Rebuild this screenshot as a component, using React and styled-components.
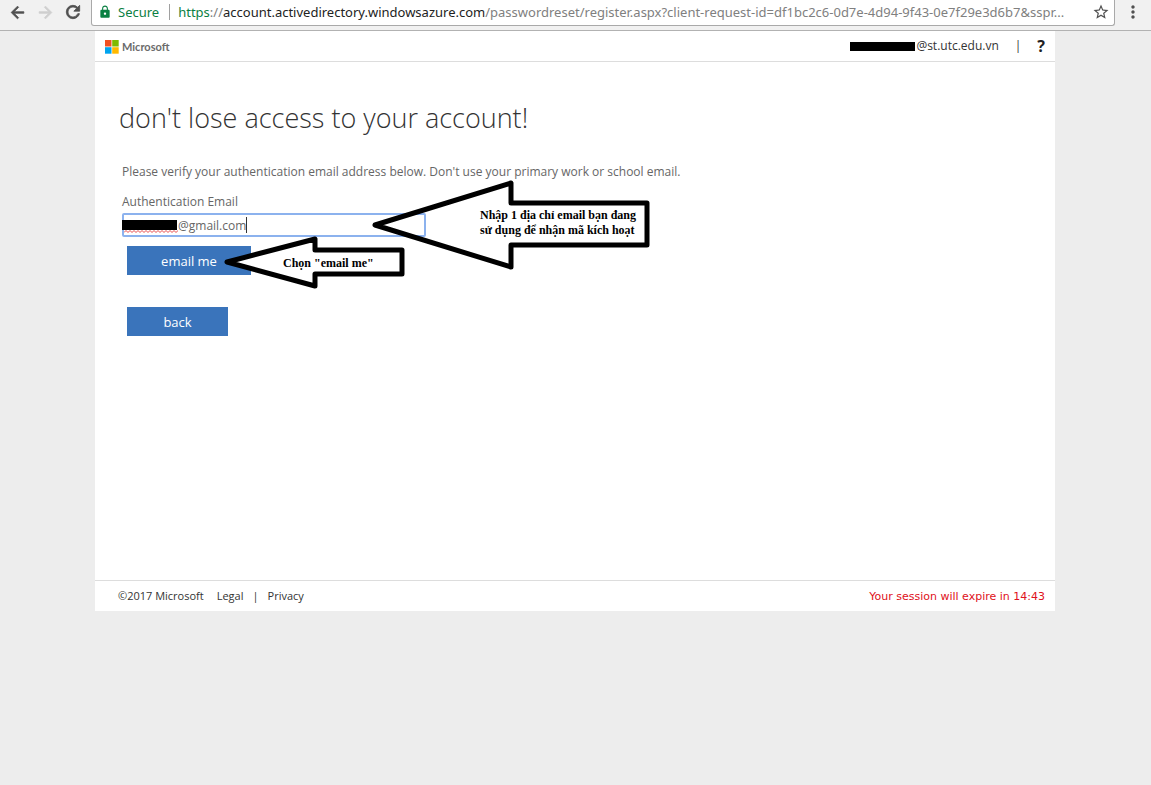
import React, { useState } from 'react';
import styled, { createGlobalStyle } from 'styled-components';
import {
  MdArrowBack,
  MdArrowForward,
  MdRefresh,
  MdLock,
  MdStarBorder,
  MdMoreVert,
} from 'react-icons/md';

const GlobalStyle = createGlobalStyle`
  *, *::before, *::after { box-sizing: border-box; }
  body {
    margin: 0;
    background: #ededed;
    color: #333;
    font: 12px/16px "Open Sans", "Noto Sans", sans-serif;
  }
`;

const Toolbar = styled.header`
  display: flex;
  align-items: flex-start;
  height: 31px;
  padding-left: 7px;
  background: #f1f1f1;
  border-bottom: 1px solid #b2b2b2;
`;

const IconButton = styled.button`
  display: flex;
  flex: none;
  align-items: center;
  justify-content: center;
  width: ${(p) => p.$width || 28}px;
  height: 24px;
  padding: 0;
  border: 0;
  background: none;
  color: ${(p) => (p.$dim ? '#cfcfcf' : '#505050')};
  font-size: 20px;

  path:last-child {
    stroke: currentColor;
    stroke-width: ${(p) => (p.$bold ? 1 : 0)};
  }
`;

const AddressBar = styled.div`
  display: flex;
  flex: 1;
  align-items: flex-start;
  min-width: 0;
  height: 26px;
  border: 1px solid #a9a9a9;
  border-top: 0;
  border-radius: 0 0 3px 3px;
  background: #fff;
  font: 13px/24px "Noto Sans", sans-serif;
`;

const Secure = styled.span`
  display: flex;
  align-items: center;
  gap: 6px;
  height: 24px;
  padding: 0 10px 0 6px;
  color: #0b8043;
`;

const Divider = styled.span`
  flex: none;
  width: 1px;
  height: 16px;
  margin: 4px 8px 0 0;
  background: #a0a0a0;
`;

const Url = styled.span`
  flex: 1;
  min-width: 0;
  overflow: hidden;
  white-space: nowrap;
  color: #808080;
`;

const Scheme = styled.span`
  color: #0b8043;
`;

const Host = styled.span`
  color: #222;
`;

const Stage = styled.div`
  padding-right: 1px;
`;

const Page = styled.div`
  max-width: 960px;
  margin: 0 auto;
  background: #fff;
`;

const Banner = styled.div`
  display: flex;
  align-items: center;
  justify-content: space-between;
  height: 31px;
  padding: 0 10px;
  border-bottom: 1px solid #ddd;
`;

const Brand = styled.a`
  display: flex;
  align-items: center;
  gap: 3px;
  padding-top: 1px;
  color: #6b6b6b;
  font: 700 11px/16px Lato, sans-serif;
  text-decoration: none;
`;

const Account = styled.div`
  display: flex;
  align-items: center;
`;

const Redaction = styled.span`
  width: 65px;
  height: 9px;
  margin-right: 1px;
  background: #000;
`;

const Separator = styled.span`
  margin: 0 ${(p) => p.$gap}px;
`;

const HelpButton = styled.button`
  padding: 0;
  border: 0;
  background: none;
  color: #222;
  font: 700 16px/20px "Noto Sans", sans-serif;
`;

const Content = styled.main`
  position: relative;
  min-height: 518px;
  padding: 36px 24px 0;
`;

const Title = styled.h1`
  margin: 0;
  color: #333;
  font: 300 27px/40px "Open Sans", sans-serif;
`;

const Form = styled.form`
  display: flex;
  flex-direction: column;
  align-items: flex-start;
  padding: 26px 3px 0;
  color: #666;
`;

const Intro = styled.p`
  margin: 0 0 14px;
`;

const Label = styled.label`
  margin-bottom: 3px;
`;

const Field = styled.div`
  position: relative;
  width: 304px;
  max-width: 100%;
  margin-bottom: 9px;
`;

const EmailInput = styled.input`
  display: block;
  width: 100%;
  height: 24px;
  padding: 0 0 0 54px;
  border: 2px solid #8cb2ee;
  border-radius: 2px;
  outline: 0;
  background: #fff;
  color: #666;
  font: 12px/20px "Open Sans", sans-serif;
`;

const FieldMask = styled.span`
  position: absolute;
  top: 7px;
  left: 0;
  width: 55px;
  height: 10px;
  background: #000;
`;

const Squiggle = styled.svg`
  position: absolute;
  top: 17px;
  left: 2px;
`;

const Caret = styled.span`
  position: absolute;
  top: 4px;
  left: 124px;
  width: 1px;
  height: 16px;
  background: #333;
`;

const ActionButton = styled.button`
  width: ${(p) => p.$width}px;
  height: 29px;
  margin: 0 0 32px 5px;
  padding: 0;
  border: 0;
  background: #3a74bb;
  color: #fff;
  font: 13px/28px "Open Sans", sans-serif;
`;

const Callout = styled.div`
  position: absolute;
  top: ${(p) => p.$top}px;
  left: ${(p) => p.$left}px;
  display: flex;
  align-items: center;
  width: ${(p) => p.$width}px;
  height: ${(p) => p.$height}px;
  padding-left: ${(p) => p.$indent}px;
  color: #000;
  font: 700 12px/15px "Liberation Serif", serif;
  white-space: nowrap;
  pointer-events: none;

  svg {
    position: absolute;
    top: 0;
    left: 0;
    overflow: visible;
  }

  span {
    position: relative;
  }
`;

const Footer = styled.footer`
  display: flex;
  align-items: center;
  height: 31px;
  padding: 0 10px 0 23px;
  border-top: 1px solid #ddd;
  color: #333;
  font-size: 11px;
`;

const FooterLink = styled.a`
  color: inherit;
  text-decoration: none;
`;

const Copyright = styled.span`
  margin-right: 13px;
`;

const Session = styled.span`
  margin-left: auto;
  padding-top: 1px;
  color: #e01020;
  font: 11px/16px "DejaVu Sans", sans-serif;
`;

function MicrosoftLogo() {
  return (
    <svg width="14" height="14" viewBox="0 0 14 14" aria-hidden="true">
      <path fill="#f25022" d="M0 0h6.5v6.5H0z" />
      <path fill="#7fba00" d="M7.2 0h6.5v6.5H7.2z" />
      <path fill="#00a4ef" d="M0 7.2h6.5v6.5H0z" />
      <path fill="#ffb900" d="M7.2 7.2h6.5v6.5H7.2z" />
    </svg>
  );
}

function ArrowCallout({ points, fill = '#fff', children, ...box }) {
  return (
    <Callout {...box}>
      <svg width={box.$width} height={box.$height} aria-hidden="true">
        <polygon points={points} fill={fill} stroke="#000" strokeWidth="5" strokeLinejoin="round" />
      </svg>
      <span>{children}</span>
    </Callout>
  );
}

export default function App() {
  const [email, setEmail] = useState('@gmail.com');

  return (
    <>
      <GlobalStyle />
      <Toolbar>
        <IconButton $width={20} $bold aria-label="Back"><MdArrowBack size={19} /></IconButton>
        <IconButton $width={36} $dim $bold aria-label="Forward"><MdArrowForward size={19} /></IconButton>
        <IconButton $width={20} $bold aria-label="Reload"><MdRefresh /></IconButton>
        <Separator $gap={4} />
        <AddressBar>
          <Secure><MdLock size={14} />Secure</Secure>
          <Divider />
          <Url>
            <Scheme>https</Scheme>://<Host>account.activedirectory.windowsazure.com</Host>
            /passwordreset/register.aspx?client-request-id=df1bc2c6-0d7e-4d94-9f43-0e7f29e3d6b7&amp;sspr...
          </Url>
          <IconButton $width={26} aria-label="Bookmark"><MdStarBorder size={18} /></IconButton>
        </AddressBar>
        <IconButton $width={36} aria-label="Menu"><MdMoreVert /></IconButton>
      </Toolbar>
      <Stage>
        <Page>
          <Banner>
            <Brand href="#"><MicrosoftLogo />Microsoft</Brand>
            <Account>
              <Redaction />
              <span>@st.utc.edu.vn</span>
              <Separator $gap={16}>|</Separator>
              <HelpButton aria-label="Help">?</HelpButton>
            </Account>
          </Banner>
          <Content>
            <Title>don't lose access to your account!</Title>
            <Form onSubmit={(e) => e.preventDefault()}>
              <Intro>
                Please verify your authentication email address below. Don't use your primary work or school email.
              </Intro>
              <Label htmlFor="email">Authentication Email</Label>
              <Field>
                <EmailInput id="email" type="text" value={email} onChange={(e) => setEmail(e.target.value)} />
                <FieldMask />
                <Squiggle width="54" height="3" viewBox="0 0 54 3" aria-hidden="true">
                  <path
                    d={'M0 2.5' + 'l2-2l2 2'.repeat(14)}
                    fill="none"
                    stroke="#e84848"
                  />
                </Squiggle>
                <Caret />
              </Field>
              <ActionButton $width={124} type="submit">email me</ActionButton>
              <ActionButton $width={101} type="button">back</ActionButton>
            </Form>
            <ArrowCallout
              $top={118} $left={275} $width={282} $height={86} $indent={110}
              points="5,45 141,3 141,23 277,23 277,65 141,65 141,87" fill="none"
            >
              Nhập 1 địa chỉ email bạn đang<br />sử dụng để nhận mã kích hoạt
            </ArrowCallout>
            <ArrowCallout
              $top={174} $left={128} $width={184} $height={54} $indent={60}
              points="4,26 92,3 92,14 179,14 179,38 92,38 92,50"
            >
              Chọn "email me"
            </ArrowCallout>
          </Content>
          <Footer>
            <Copyright>©2017 Microsoft</Copyright>
            <FooterLink href="#">Legal</FooterLink>
            <Separator $gap={9}>|</Separator>
            <FooterLink href="#">Privacy</FooterLink>
            <Session>Your session will expire in 14:43</Session>
          </Footer>
        </Page>
      </Stage>
    </>
  );
}
